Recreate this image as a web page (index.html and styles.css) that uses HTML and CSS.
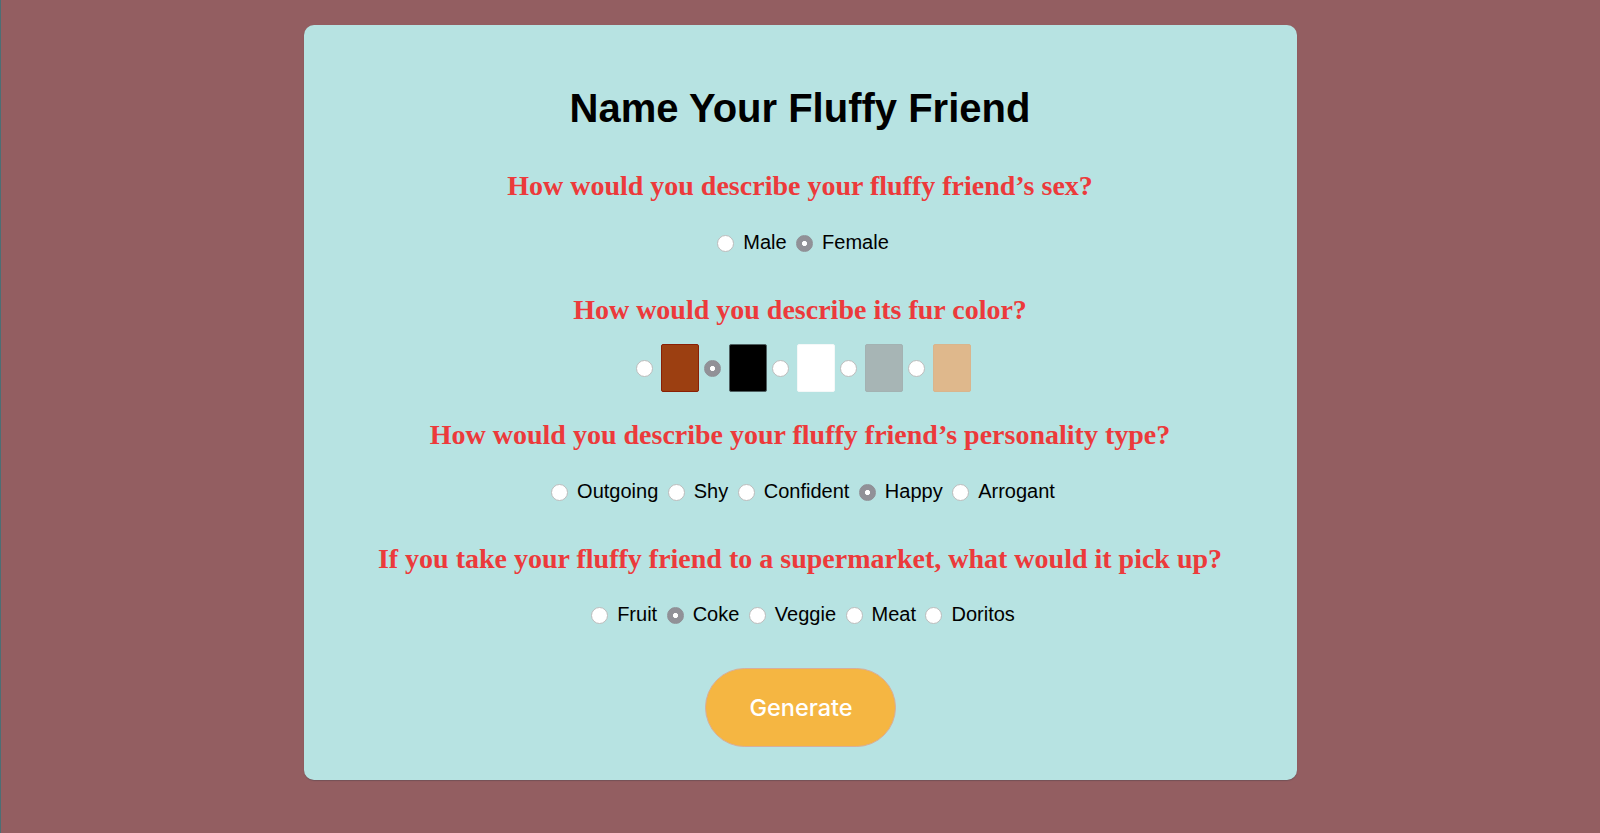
FILE: index.html
```html
<!DOCTYPE html>
<html lang="en">
<head>
<meta charset="utf-8">
<title>Name Your Fluffy Friend</title>
<link rel="stylesheet" href="styles.css">
</head>
<body>
<main class="card">
  <h1 class="title">Name Your Fluffy Friend</h1>
  <form class="form">
    <h2 class="question q-first">How would you describe your fluffy friend’s sex?</h2>
    <div class="options">
      <label class="option"><input type="radio" name="sex" value="male"><span>Male</span></label>
      <label class="option"><input type="radio" name="sex" value="female" checked><span>Female</span></label>
    </div>

    <h2 class="question q-fur">How would you describe its fur color?</h2>
    <div class="options swatches">
      <label class="swatch-option"><input type="radio" name="fur" value="brown"><span class="swatch swatch-brown"></span></label>
      <label class="swatch-option"><input type="radio" name="fur" value="black" checked><span class="swatch swatch-black"></span></label>
      <label class="swatch-option"><input type="radio" name="fur" value="white"><span class="swatch swatch-white"></span></label>
      <label class="swatch-option"><input type="radio" name="fur" value="gray"><span class="swatch swatch-gray"></span></label>
      <label class="swatch-option"><input type="radio" name="fur" value="tan"><span class="swatch swatch-tan"></span></label>
    </div>

    <h2 class="question q-after-swatches">How would you describe your fluffy friend’s personality type?</h2>
    <div class="options">
      <label class="option"><input type="radio" name="personality" value="outgoing"><span>Outgoing</span></label>
      <label class="option"><input type="radio" name="personality" value="shy"><span>Shy</span></label>
      <label class="option"><input type="radio" name="personality" value="confident"><span>Confident</span></label>
      <label class="option"><input type="radio" name="personality" value="happy" checked><span>Happy</span></label>
      <label class="option"><input type="radio" name="personality" value="arrogant"><span>Arrogant</span></label>
    </div>

    <h2 class="question q-last">If you take your fluffy friend to a supermarket, what would it pick up?</h2>
    <div class="options options-last">
      <label class="option"><input type="radio" name="pick" value="fruit"><span>Fruit</span></label>
      <label class="option"><input type="radio" name="pick" value="coke" checked><span>Coke</span></label>
      <label class="option"><input type="radio" name="pick" value="veggie"><span>Veggie</span></label>
      <label class="option"><input type="radio" name="pick" value="meat"><span>Meat</span></label>
      <label class="option"><input type="radio" name="pick" value="doritos"><span>Doritos</span></label>
    </div>

    <div class="actions">
      <button type="button" class="generate">Generate</button>
    </div>
  </form>
</main>
</body>
</html>
```

FILE: styles.css
```css
* {
  box-sizing: border-box;
}

html {
  background: #935e61;
}

body {
  margin: 0;
  min-height: 833px;
  padding-top: 25px;
  background: #935e61;
  box-shadow: inset 1px 0 0 #4b6f75;
  font-family: "Liberation Sans", Arial, sans-serif;
}

.card {
  width: 993px;
  margin: 0 auto;
  padding: 60px 0 33px;
  background: #b7e3e2;
  border-radius: 10px;
  box-shadow: 0 1px 1px rgba(60, 60, 70, 0.35);
  text-align: center;
}

.title {
  margin: 0;
  font-family: "Liberation Sans", Arial, sans-serif;
  font-size: 40px;
  line-height: 46px;
  font-weight: 700;
  color: #000;
}

.form {
  display: flex;
  flex-direction: column;
  align-items: center;
}

.question {
  margin: 39px 0 0;
  font-family: "Liberation Serif", "Times New Roman", serif;
  font-size: 28px;
  line-height: 32px;
  font-weight: 700;
  color: #ec3a3b;
}

.q-first {
  margin-top: 38.5px;
}

.q-fur {
  margin-top: 40px;
}

.q-after-swatches {
  margin-top: 27px;
}

.q-last {
  margin-top: 40px;
}

.options {
  display: flex;
  align-items: center;
  justify-content: center;
  gap: 9.5px;
  height: 24px;
  margin-top: 28px;
  padding-left: 6px;
}

.options-last {
  margin-top: 27px;
}

.option {
  display: flex;
  align-items: center;
  gap: 9px;
  font-size: 20px;
  line-height: 24px;
  color: #000;
}

input[type="radio"] {
  appearance: none;
  -webkit-appearance: none;
  width: 17px;
  height: 17px;
  margin: 3px 0 0;
  border-radius: 50%;
  border: 1px solid #bcbcbc;
  background: #fff;
  flex: none;
}

input[type="radio"]:checked {
  border-color: #8f8f95;
  background: radial-gradient(circle, #fff 0 2.2px, #919197 2.9px);
}

.swatches {
  height: 48px;
  margin-top: 18px;
  gap: 4.3px;
  padding-left: 7px;
}

.swatch-option {
  display: flex;
  align-items: center;
  gap: 8.7px;
}

.swatch-option input[type="radio"] {
  margin-top: 2px;
}

.swatch {
  display: block;
  width: 38px;
  height: 48px;
  border-radius: 2px;
  border: 1px solid transparent;
}

.swatch-brown {
  background: #9c3f11;
  border-color: #8a1f05;
}

.swatch-black {
  background: #000;
  border-color: #4f6061;
}

.swatch-white {
  background: #fff;
  border-color: #f4f8f8;
}

.swatch-gray {
  background: #a7b5b5;
  border-color: #a3b2b2;
}

.swatch-tan {
  background: #dfb88c;
  border-color: #d9b58d;
}

.actions {
  margin-top: 42.5px;
  display: flex;
  justify-content: center;
}

.generate {
  width: 191px;
  height: 79px;
  border-radius: 40px;
  border: 1px solid #d7ae9c;
  background: #f5b642;
  color: #fff;
  font-family: Inter, "Open Sans", sans-serif;
  font-size: 23.5px;
  font-weight: 500;
  padding: 0 0 0 2px;
  cursor: pointer;
}
```
